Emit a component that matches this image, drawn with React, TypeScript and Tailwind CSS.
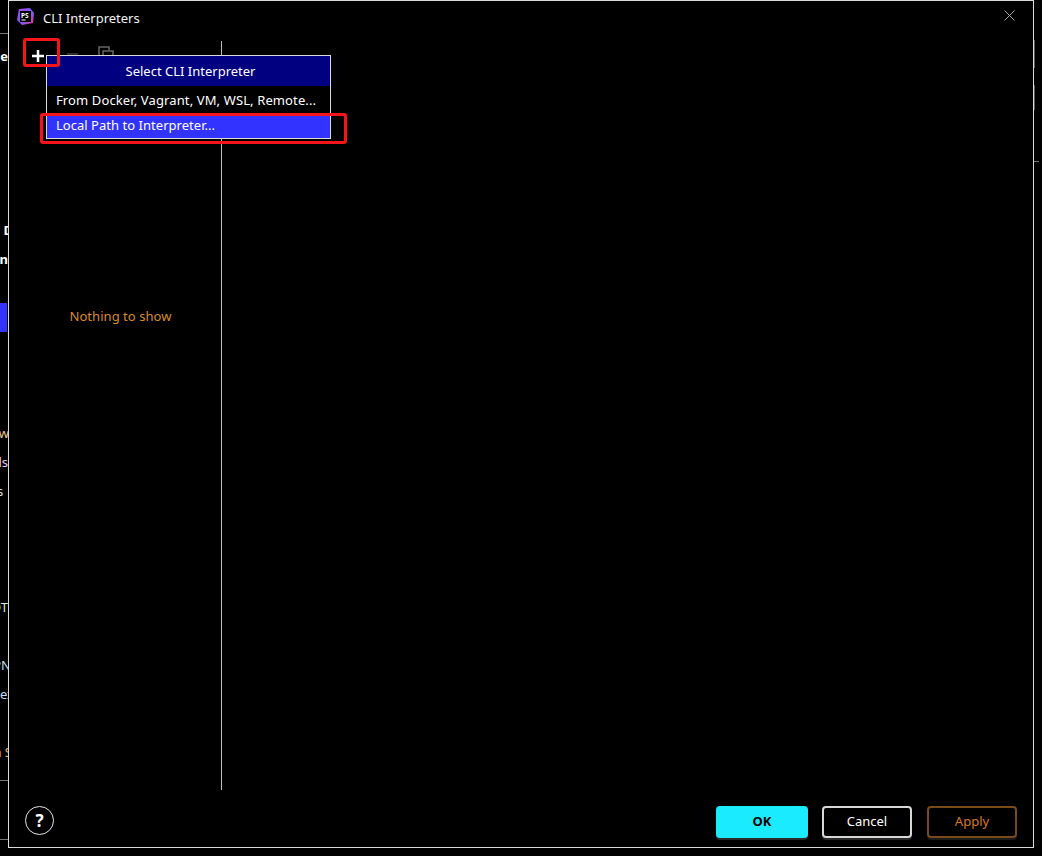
const rows: { t?: string; c?: string }[] = [
  { t: "e", c: "font-bold justify-end" },
  {}, {}, {}, {}, {},
  { t: "D", c: "font-bold justify-end -mr-[5px]" },
  { t: "n", c: "font-bold justify-end" },
  {},
  { c: "bg-[#3333ff] mr-[1px]" },
  {}, {}, {},
  { t: "w", c: "text-[#e8c98a] justify-end -mr-[1px]" },
  { t: "ls", c: "text-[#e0c8ff] justify-end" },
  { t: "s", c: "text-[#ddd] justify-start -ml-[3px]" },
  {}, {}, {},
  { t: "OT", c: "text-[#cfe8d0] justify-end" },
  {},
  { t: "PN", c: "text-[#bde] justify-end -mr-[3px]" },
  { t: "ex", c: "text-[#cde] justify-start" },
  {},
  { t: "n S", c: "text-[#e8b060] justify-end -mr-[4px]" },
];

export default function App() {
  return (
    <div className="relative flex h-[856px] w-[1042px] overflow-hidden bg-black text-[13px] text-white font-['Noto_Sans',sans-serif]">
      {/* IDE settings tree showing behind the dialog */}
      <div className="flex h-full w-2 shrink-0 flex-col overflow-hidden">
        <div className="h-[34px] shrink-0 border-b border-[#777]" />
        <div className="flex shrink-0 flex-col pt-[8px]">
          {rows.map((r, i) => (
            <div key={i} className={`flex h-[29px] items-center whitespace-nowrap ${r.c ?? ""}`}>
              {r.t}
            </div>
          ))}
        </div>
        <div className="mt-[13px] h-[60px] shrink-0 border-y border-[#777]" />
      </div>

      {/* Dialog */}
      <div className="flex h-[848px] w-[1026px] shrink-0 flex-col border border-[#dcdcdc] bg-black">
        <div className="flex h-[34px] shrink-0 items-center pl-[8px] pr-[18px]">
          <svg width="17" height="17" viewBox="0 0 17 17" className="mr-[9px] mt-[-3px]">
            <defs>
              <linearGradient id="ps" x1="0" y1="0" x2="1" y2="1">
                <stop offset="0" stopColor="#b345f1" />
                <stop offset="0.55" stopColor="#765af8" />
                <stop offset="1" stopColor="#ff318c" />
              </linearGradient>
            </defs>
            <path d="M2 1 L13 0 L17 5 L16 15 L5 17 L0 12 Z" fill="url(#ps)" />
            <rect x="3" y="3" width="11" height="11" fill="#000" />
            <rect x="4.5" y="11.5" width="4" height="1" fill="#fff" />
            <text x="4" y="9.5" fontSize="6.5" fontWeight="700" fill="#fff">PS</text>
          </svg>
          <span className="mt-[1px] text-[13px] text-[#f2f2f2]">CLI Interpreters</span>
          <svg width="11" height="11" viewBox="0 0 11 11" className="ml-auto mt-[-5px]" stroke="#a8a8a8" strokeWidth="1" fill="none">
            <path d="M0.5 0.5 L10.5 10.5 M10.5 0.5 L0.5 10.5" />
          </svg>
        </div>

        <div className="flex min-h-0 flex-1 pt-[6px]">
          <div className="flex h-[749px] w-[213px] shrink-0 flex-col border-r border-[#bdbdbd]">
            <div className="flex h-[28px] items-center pl-[22px]">
              <svg width="14" height="14" viewBox="0 0 14 14" className="mt-[2px]" fill="#fff">
                <rect x="5.75" y="1" width="2.5" height="12" />
                <rect x="1" y="5.75" width="12" height="2.5" />
              </svg>
              <div className="ml-[22px] mt-[-2px] h-[2px] w-[11px] bg-[#2e2e2e]" />
              <svg width="16" height="16" viewBox="0 0 16 16" className="ml-[20px] mt-[-3px]" fill="none" stroke="#666" strokeWidth="1.5">
                <path d="M4 11 H1 V1 H11 V4" />
                <rect x="5" y="5" width="10" height="10" />
              </svg>
            </div>
            <div className="flex flex-1 items-start justify-center pl-[11px] pt-[238px] text-[13px] tracking-[0.05px] text-[#d98a28]">Nothing to show</div>
          </div>
          <div className="flex-1" />
        </div>

        <div className="flex h-[56px] shrink-0 items-start pl-[16px] pr-[16px] pt-[15px]">
          <div className="flex h-[29px] w-[29px] items-center justify-center rounded-full border border-[#e8e8e8] text-[17px] font-bold">?</div>
          <div className="ml-auto flex">
            <button className="h-[32px] w-[92px] rounded-[4px] bg-[#1aebff] text-[13px] font-bold text-black shadow-[0_2px_0_#2a2a2a]">OK</button>
            <button className="ml-[14px] h-[32px] w-[90px] rounded-[4px] border-2 border-[#d8d8d8] text-[13px] text-white shadow-[0_2px_0_#2a2a2a]">Cancel</button>
            <button className="ml-[15px] h-[32px] w-[90px] rounded-[4px] border-2 border-[#7a4a1a] text-[13px] text-[#d9771f] shadow-[0_2px_0_#1a1a1a]">Apply</button>
          </div>
        </div>
      </div>

      {/* Edge of the IDE window on the right */}
      <div className="flex h-full flex-1 flex-col pt-[40px]">
        <div className="h-[28px] w-px bg-[#555]" />
        <div className="mt-[17px] h-[25px] w-px bg-[#555]" />
        <div className="mt-[51px] h-px w-[5px] bg-[#777]" />
      </div>

      {/* Popup menu */}
      <div className="absolute left-[46px] top-[55px] flex h-[84px] w-[285px] flex-col border border-[#dcdcdc] bg-black">
        <div className="flex h-[30px] items-center justify-center bg-[#000080] pl-[4px] pt-[2px] text-[13px]">Select CLI Interpreter</div>
        <div className="flex h-[28px] items-center pl-[9px] pt-[2px] text-[13px] tracking-[0.12px]">From Docker, Vagrant, VM, WSL, Remote...</div>
        <div className="flex h-[24px] items-center bg-[#3333ff] pl-[9px] text-[13px] tracking-[0.03px]">Local Path to Interpreter...</div>
      </div>

      {/* Red annotations */}
      <div className="absolute left-[23px] top-[38px] h-[29px] w-[37px] rounded-[3px] border-[3px] border-[#f5141a]" />
      <div className="absolute left-[40px] top-[113px] h-[31px] w-[307px] rounded-[3px] border-[3px] border-[#f5141a]" />
    </div>
  );
}
